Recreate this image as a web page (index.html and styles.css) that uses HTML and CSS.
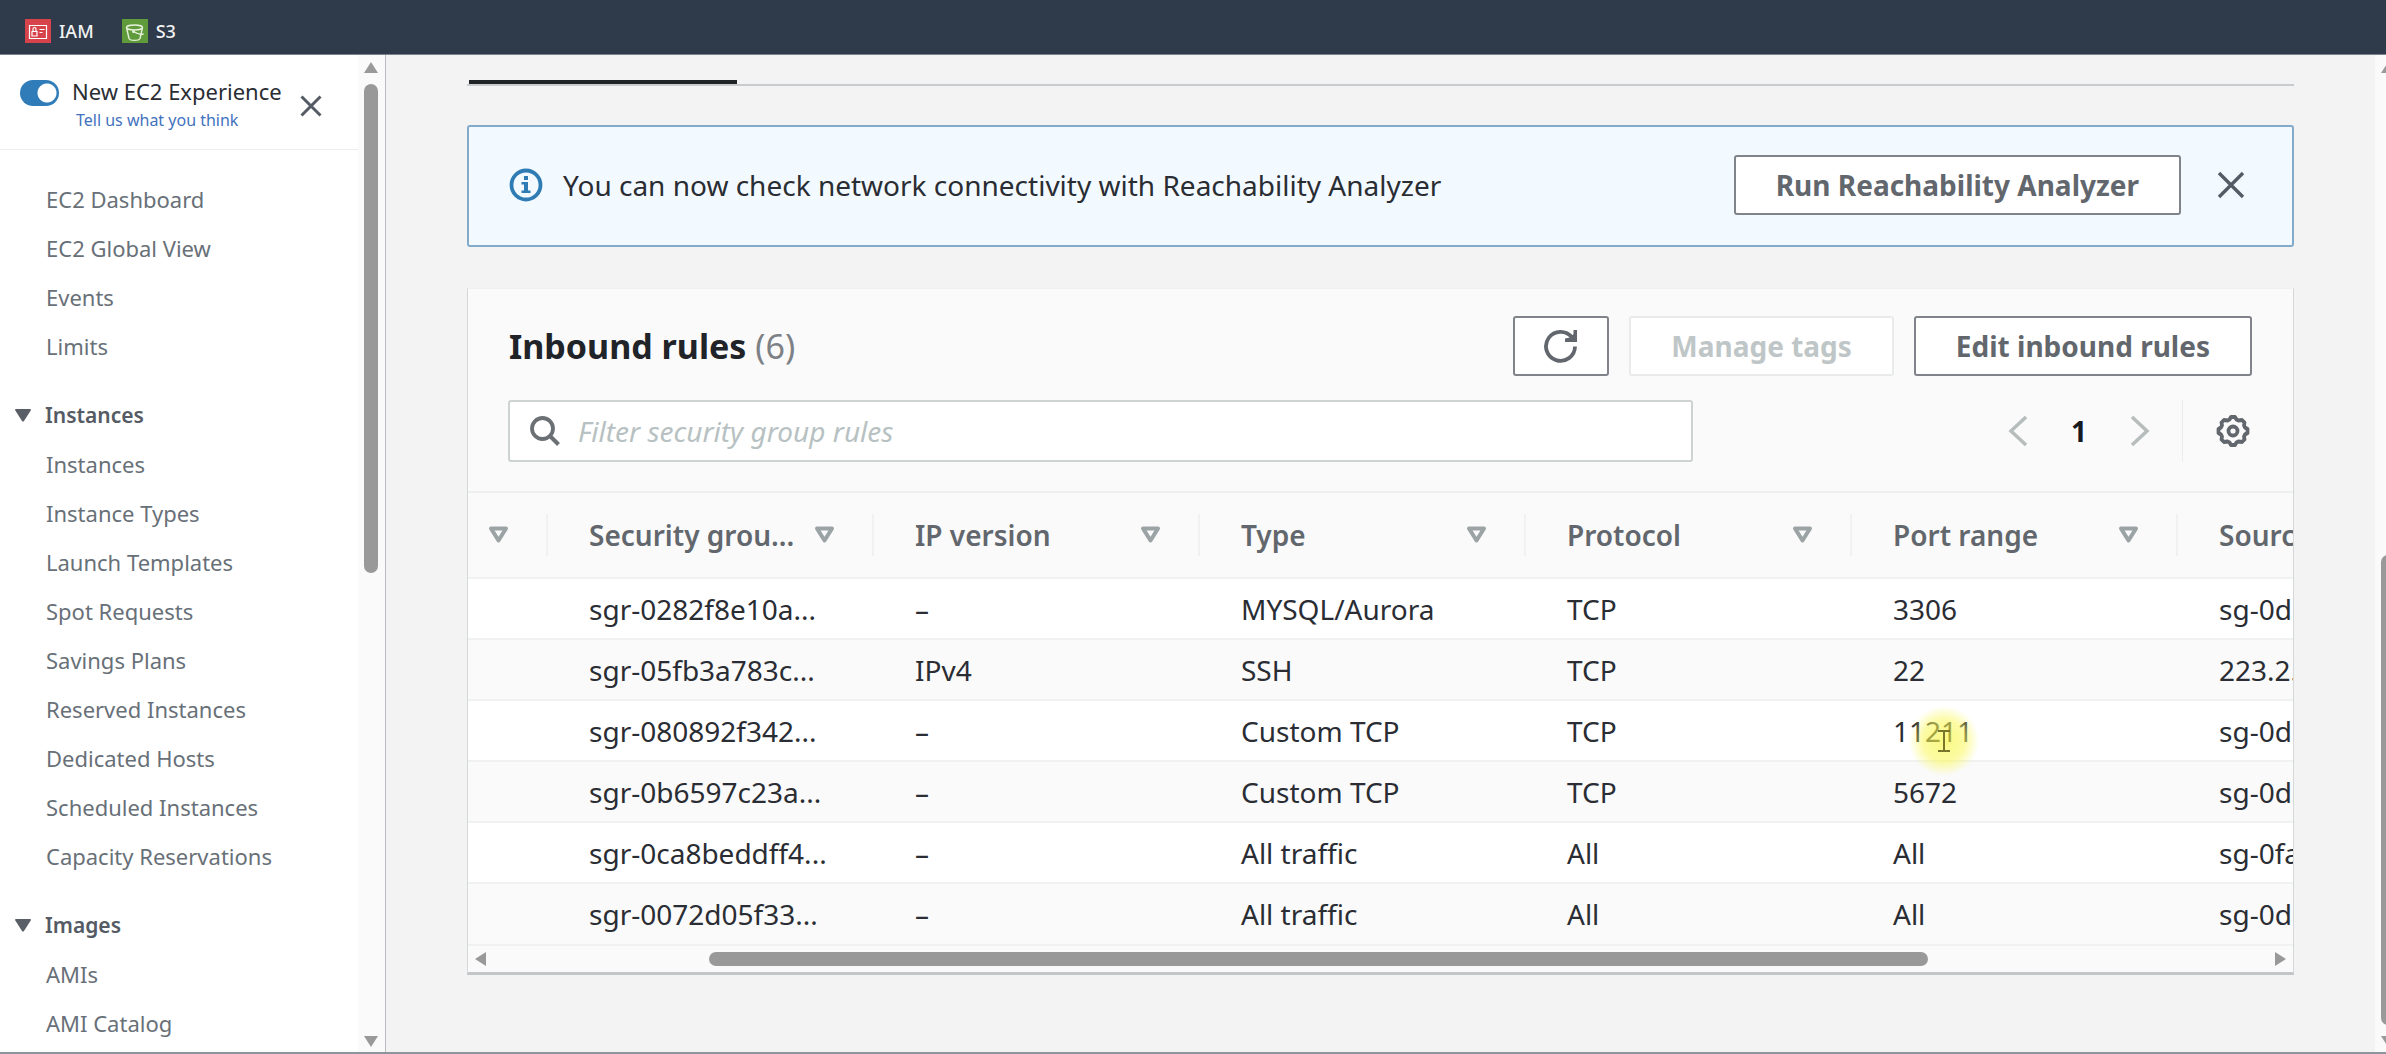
FILE: index.html
```
<!DOCTYPE html>
<html lang="en">
<head>
<meta charset="utf-8">
<title>Security group | EC2</title>
<link rel="stylesheet" href="styles.css">
</head>
<body>
<header class="topbar">
  <a class="service" href="#iam">
    <svg class="service-icon" viewBox="0 0 26 24" aria-hidden="true">
      <rect width="26" height="24" fill="#d6434a"/>
      <g fill="none" stroke="#fff" stroke-width="1.2"><path d="M4.500 6.500h17v13h-17z"/><path d="M7 12.500h5v4.500H7zM8 12.500v-2.500a1.500 1.500 0 0 1 3 0v2.500M14.500 10.500h5M14.500 13.500h3"/></g>
    </svg>
    <span>IAM</span>
  </a>
  <a class="service" href="#s3">
    <svg class="service-icon" viewBox="0 0 26 24" aria-hidden="true">
      <rect width="26" height="24" fill="#5f9a3b"/>
      <g fill="none" stroke="#e6f1da" stroke-width="1.400"><ellipse cx="12.500" cy="8.500" rx="8" ry="2.500"/><path d="M4.500 8.500l2.500 11c1.500 2.500 9.500 2.500 11 0l2.500-11M11.500 12.500c4 2.500 9.500 4 10 2"/></g><circle cx="11.500" cy="12.500" r="1.500" fill="#e6f1da"/>
    </svg>
    <span>S3</span>
  </a>
</header>

<div class="shell">
  <aside class="sidebar">
    <div class="sidebar-body">
      <div class="experience">
        <input class="toggle" type="checkbox" id="new-experience" checked>
        <div class="experience-text">
          <label for="new-experience">New EC2 Experience</label>
          <a href="#feedback">Tell us what you think</a>
        </div>
        <button class="icon-button" type="button" aria-label="Close navigation">
          <svg class="close-small" viewBox="0 0 22 22" aria-hidden="true"><path d="M1.500 1.500l19 19M20.500 1.500l-19 19" stroke="#545b64" stroke-width="3"/></svg>
        </button>
      </div>
      <nav class="nav" aria-label="EC2">
        <ul class="nav-list">
          <li><a href="#dashboard">EC2 Dashboard</a></li>
          <li><a href="#global">EC2 Global View</a></li>
          <li><a href="#events">Events</a></li>
          <li><a href="#limits">Limits</a></li>
        </ul>
        <section>
          <h2 class="nav-heading"><svg class="caret" viewBox="0 0 16 13" aria-hidden="true"><path d="M1 0h14a1 1 0 0 1 1 1L9 12q-1 1-2 0L0 1a1 1 0 0 1 1-1z" fill="#5a5e66"/></svg>Instances</h2>
          <ul class="nav-list">
            <li><a href="#instances">Instances</a></li>
            <li><a href="#types">Instance Types</a></li>
            <li><a href="#templates">Launch Templates</a></li>
            <li><a href="#spot">Spot Requests</a></li>
            <li><a href="#savings">Savings Plans</a></li>
            <li><a href="#reserved">Reserved Instances</a></li>
            <li><a href="#hosts">Dedicated Hosts</a></li>
            <li><a href="#scheduled">Scheduled Instances</a></li>
            <li><a href="#capacity">Capacity Reservations</a></li>
          </ul>
        </section>
        <section>
          <h2 class="nav-heading"><svg class="caret" viewBox="0 0 16 13" aria-hidden="true"><path d="M1 0h14a1 1 0 0 1 1 1L9 12q-1 1-2 0L0 1a1 1 0 0 1 1-1z" fill="#5a5e66"/></svg>Images</h2>
          <ul class="nav-list">
            <li><a href="#amis">AMIs</a></li>
            <li><a href="#catalog">AMI Catalog</a></li>
          </ul>
        </section>
      </nav>
    </div>
    <div class="scroll-v" aria-hidden="true">
      <svg class="arrow-v" viewBox="0 0 14 11"><path d="M7 0l7 11H0z" fill="#999"/></svg>
      <div class="track-v track-side"><div class="thumb-v"></div></div>
      <svg class="arrow-v" viewBox="0 0 14 11"><path d="M7 11l7-11H0z" fill="#999"/></svg>
    </div>
  </aside>

  <main class="main">
    <div class="tabs"><div class="tab-active"></div></div>

    <section class="alert">
      <svg class="info-icon" viewBox="0 0 34 34" aria-hidden="true"><circle cx="17" cy="17" r="14.500" fill="none" stroke="#2f7cb5" stroke-width="3.800"/><path d="M15 8h4v4h-4zM12.500 14h6.500v8.500h2.500V25h-9v-2.500H15v-6h-2.500z" fill="#2f7cb5"/></svg>
      <p class="alert-text">You can now check network connectivity with Reachability Analyzer</p>
      <button class="button" type="button">Run Reachability Analyzer</button>
      <button class="icon-button" type="button" aria-label="Dismiss">
        <svg class="close-large" viewBox="0 0 28 28" aria-hidden="true"><path d="M2 2l24 24M26 2L2 26" stroke="#545b64" stroke-width="3.400"/></svg>
      </button>
    </section>

    <section class="panel">
      <div class="panel-head">
        <h1 class="title">Inbound rules <span class="count">(6)</span></h1>
        <div class="actions">
          <button class="button button-icon" type="button" aria-label="Refresh">
            <svg class="refresh" viewBox="0 0 34 34" aria-hidden="true"><path d="M31 17.500A14.500 14.500 0 1 1 28 8.500" fill="none" stroke="#62676d" stroke-width="3.800"/><path d="M33 1v12H21V9.500l5-1L29.500 5V1z" fill="#62676d"/></svg>
          </button>
          <button class="button" type="button" disabled>Manage tags</button>
          <button class="button" type="button">Edit inbound rules</button>
        </div>
      </div>
      <div class="filter-row">
        <label class="search">
          <svg class="search-icon" viewBox="0 0 30 30" aria-hidden="true"><circle cx="12.500" cy="12.500" r="10.500" fill="none" stroke="#6b7075" stroke-width="3.800"/><path d="M20 20l8.500 8.500" stroke="#6b7075" stroke-width="4"/></svg>
          <input type="text" aria-label="Filter rules" placeholder="Filter security group rules">
        </label>
        <div class="pager">
          <button class="icon-button" type="button" aria-label="Previous page"><svg class="chevron" viewBox="0 0 20 30" aria-hidden="true"><path d="M18 1L3 15l15 14" fill="none" stroke="#b7bcbc" stroke-width="3.500"/></svg></button>
          <button class="page" type="button">1</button>
          <button class="icon-button" type="button" aria-label="Next page"><svg class="chevron" viewBox="0 0 20 30" aria-hidden="true"><path d="M2 1l15 14L2 29" fill="none" stroke="#b7bcbc" stroke-width="3.500"/></svg></button>
          <button class="icon-button settings" type="button" aria-label="Preferences">
            <svg class="gear" viewBox="0 0 34 34" aria-hidden="true"><g fill="none" stroke="#62676d" stroke-width="3.800" stroke-linejoin="round"><path d="M13.500 5.500L15 3h4l1.500 2.500 2 1 3.500-.5 2.500 2.500-.5 3 1 2L31.500 15v4L29 20.500l-1 2 .5 3-2.500 2.500-3.500-.5-2 1L19 31h-4l-1.500-2.500-2-1-3.500.5L5.500 25.500l.5-3-1-2L2.500 19v-4L5 13.500l1-2-.5-3L8 6l3.500.5z"/><circle cx="17" cy="17" r="4.500"/></g></svg>
          </button>
        </div>
      </div>

      <div class="table-wrap">
        <table class="rules">
          <colgroup><col class="col-cut"><col><col><col><col><col><col></colgroup>
          <thead>
            <tr>
              <th scope="col"><div class="th"><span></span><svg class="sort" viewBox="0 0 22 18" aria-hidden="true"><path d="M3 2.500h15l-7.500 12z" fill="none" stroke="#9ba3a4" stroke-width="4" stroke-linejoin="round"/></svg></div></th>
              <th scope="col"><div class="th"><span>Security grou...</span><svg class="sort" viewBox="0 0 22 18" aria-hidden="true"><path d="M3 2.500h15l-7.500 12z" fill="none" stroke="#9ba3a4" stroke-width="4" stroke-linejoin="round"/></svg></div></th>
              <th scope="col"><div class="th"><span>IP version</span><svg class="sort" viewBox="0 0 22 18" aria-hidden="true"><path d="M3 2.500h15l-7.500 12z" fill="none" stroke="#9ba3a4" stroke-width="4" stroke-linejoin="round"/></svg></div></th>
              <th scope="col"><div class="th"><span>Type</span><svg class="sort" viewBox="0 0 22 18" aria-hidden="true"><path d="M3 2.500h15l-7.500 12z" fill="none" stroke="#9ba3a4" stroke-width="4" stroke-linejoin="round"/></svg></div></th>
              <th scope="col"><div class="th"><span>Protocol</span><svg class="sort" viewBox="0 0 22 18" aria-hidden="true"><path d="M3 2.500h15l-7.500 12z" fill="none" stroke="#9ba3a4" stroke-width="4" stroke-linejoin="round"/></svg></div></th>
              <th scope="col"><div class="th"><span>Port range</span><svg class="sort" viewBox="0 0 22 18" aria-hidden="true"><path d="M3 2.500h15l-7.500 12z" fill="none" stroke="#9ba3a4" stroke-width="4" stroke-linejoin="round"/></svg></div></th>
              <th scope="col"><div class="th"><span>Source</span></div></th>
            </tr>
          </thead>
          <tbody>
            <tr><td></td><td>sgr-0282f8e10a...</td><td>–</td><td>MYSQL/Aurora</td><td>TCP</td><td>3306</td><td>sg-0dc</td></tr>
            <tr><td></td><td>sgr-05fb3a783c...</td><td>IPv4</td><td>SSH</td><td>TCP</td><td>22</td><td>223.2.</td></tr>
            <tr><td></td><td>sgr-080892f342...</td><td>–</td><td>Custom TCP</td><td>TCP</td><td class="hovered">11211<span class="pointer" aria-hidden="true"><svg class="ibeam" viewBox="0 0 12 22"><path d="M0 1h12M0 21h12M6 1v20" stroke="#77762a" stroke-width="2"/></svg></span></td><td>sg-0dc</td></tr>
            <tr><td></td><td>sgr-0b6597c23a...</td><td>–</td><td>Custom TCP</td><td>TCP</td><td>5672</td><td>sg-0dc</td></tr>
            <tr><td></td><td>sgr-0ca8beddff4...</td><td>–</td><td>All traffic</td><td>All</td><td>All</td><td>sg-0fa</td></tr>
            <tr><td></td><td>sgr-0072d05f33...</td><td>–</td><td>All traffic</td><td>All</td><td>All</td><td>sg-0dc</td></tr>
          </tbody>
        </table>
      </div>
      <div class="scroll-h" aria-hidden="true">
        <svg class="arrow-h" viewBox="0 0 11 14"><path d="M0 7l11-7v14z" fill="#999"/></svg>
        <div class="track-h"><div class="thumb-h"></div></div>
        <svg class="arrow-h" viewBox="0 0 11 14"><path d="M11 7L0 0v14z" fill="#999"/></svg>
      </div>
    </section>
  </main>

  <div class="scroll-v scroll-page" aria-hidden="true">
    <svg class="arrow-v" viewBox="0 0 14 11"><path d="M7 0l7 11H0z" fill="#999"/></svg>
    <div class="track-v track-page"><div class="thumb-v"></div></div>
    <svg class="arrow-v" viewBox="0 0 14 11"><path d="M7 11l7-11H0z" fill="#999"/></svg>
  </div>
</div>
</body>
</html>
```
FILE: styles.css
```
* {
  box-sizing: border-box;
}

body {
  margin: 0;
  height: 100vh;
  display: flex;
  flex-direction: column;
  overflow: hidden;
  border-bottom: 2px solid #8f939b;
  background: #f3f3f3;
  color: #2a2d33;
  font-family: "Noto Sans", "Open Sans", sans-serif;
  font-size: 28px;
}

a {
  color: inherit;
  text-decoration: none;
}

button {
  font-family: inherit;
  cursor: pointer;
}

svg {
  display: block;
  flex: none;
}

/* Top bar */
.topbar {
  flex: none;
  height: 55px;
  display: flex;
  align-items: center;
  gap: 28px;
  padding: 8px 25px 0;
  border-bottom: 1px solid #7b828c;
  background: #2f3a4b;
  color: #f2f3f3;
}

.service {
  display: flex;
  align-items: center;
  gap: 8px;
  font-size: 18px;
  font-weight: 500;
  line-height: 22px;
}

.service-icon {
  width: 26px;
  height: 24px;
}

.shell {
  flex: 1;
  min-height: 0;
  display: flex;
}

/* Sidebar */
.sidebar {
  flex: none;
  width: 386px;
  display: flex;
  background: #fff;
  border-right: 1px solid #b9bcc0;
}

.sidebar-body {
  flex: 1;
  overflow: hidden;
}

.experience {
  height: 95px;
  display: flex;
  align-items: flex-start;
  padding: 21px 36px 0 20px;
  border-bottom: 1px solid #eaeded;
}

.toggle {
  appearance: none;
  flex: none;
  width: 39px;
  height: 26px;
  margin: 4px 13px 0 0;
  border-radius: 13px;
  background: radial-gradient(circle at 27px 13px, #fff 9px, #2f7cb8 10px);
}

.experience-text {
  flex: 1;
  display: flex;
  flex-direction: column;
  font-size: 22px;
  line-height: 30px;
  white-space: nowrap;
}

.experience-text a {
  padding-left: 4px;
  color: #4272be;
  font-size: 16px;
  line-height: 28px;
}

.icon-button {
  flex: none;
  padding: 0;
  border: 0;
  background: none;
}

.close-small {
  width: 22px;
  height: 22px;
  margin-top: 19px;
}

.nav {
  display: flex;
  flex-direction: column;
  gap: 20px;
  padding-top: 25px;
  color: #687078;
  font-size: 22px;
  line-height: 49px;
}

.nav-list {
  margin: 0;
  padding: 0 0 0 46px;
  list-style: none;
}

.nav-heading {
  display: flex;
  align-items: center;
  gap: 14px;
  margin: 0;
  padding-left: 15px;
  color: #545b64;
  font-size: 21px;
  font-weight: 600;
}

.caret {
  width: 16px;
  height: 13px;
}

/* Scroll bars */
.scroll-v {
  flex: none;
  width: 27px;
  display: flex;
  flex-direction: column;
  gap: 11px;
  padding: 7px 0 5px 6px;
  background: #fafafa;
}

.arrow-v {
  width: 14px;
  height: 11px;
}

.track-v {
  flex: 1;
  min-height: 0;
}

.thumb-v {
  width: 14px;
  border-radius: 7px;
  background: #999;
}

.track-side .thumb-v {
  height: 52%;
}

.track-page {
  display: flex;
  flex-direction: column;
  justify-content: flex-end;
}

.track-page .thumb-v {
  height: 50%;
}

.scroll-page {
  width: 11px;
  overflow: hidden;
}

/* Content */
.main {
  flex: 1;
  min-width: 0;
  padding: 0 81px;
}

.tabs {
  height: 31px;
  display: flex;
  align-items: flex-end;
  border-bottom: 2px solid #c9cccf;
}

.tab-active {
  width: 268px;
  height: 4px;
  margin-left: 2px;
  background: #1f2326;
}

.alert {
  height: 122px;
  display: flex;
  align-items: center;
  margin-top: 39px;
  padding: 0 47px 2px 40px;
  border: 2px solid #84aaca;
  border-radius: 3px;
  background: #f3faff;
}

.info-icon {
  width: 34px;
  height: 34px;
}

.alert-text {
  flex: 1;
  margin: 0 0 0 20px;
}

.button {
  height: 60px;
  padding: 0 40px;
  border: 2px solid #80848a;
  border-radius: 3px;
  background: #fff;
  color: #62676d;
  font-size: 28px;
  font-weight: 700;
  line-height: 36px;
  white-space: nowrap;
}

.button:disabled {
  border-color: #e9ebeb;
  color: #bfc6c7;
}

.alert .button {
  margin-right: 36px;
}

.close-large {
  width: 28px;
  height: 28px;
}

.panel {
  margin-top: 41px;
  border: 1px solid #d5d8da;
  border-top-color: #f0f0f0;
  border-bottom: 3px solid #c2c6c7;
  background: #fafafa;
}

.panel-head {
  display: flex;
  align-items: center;
  justify-content: space-between;
  padding: 27px 41px 0;
}

.title {
  margin: 0;
  color: #202328;
  font-size: 34px;
  font-weight: 700;
  line-height: 60px;
}

.count {
  color: #7d8186;
  font-weight: 400;
}

.actions {
  display: flex;
  gap: 20px;
}

.button-icon {
  padding: 0 29px;
}

.refresh {
  width: 34px;
  height: 34px;
}

.filter-row {
  height: 115px;
  display: flex;
  align-items: flex-start;
  justify-content: space-between;
  padding: 24px 43px 0 40px;
}

.search {
  width: 68%;
  height: 62px;
  display: flex;
  align-items: center;
  gap: 18px;
  padding: 0 20px;
  border: 2px solid #cdd2d3;
  border-radius: 3px;
  background: #fff;
}

.search-icon {
  width: 30px;
  height: 30px;
}

.search input {
  flex: 1;
  padding: 0;
  border: 0;
  outline: 0;
  background: none;
  font: inherit;
}

.search input::placeholder {
  color: #b7c1c2;
  font-style: italic;
  opacity: 1;
}

.pager {
  display: flex;
  align-items: center;
  height: 62px;
}

.chevron {
  width: 20px;
  height: 30px;
}

.page {
  width: 102px;
  padding: 0;
  border: 0;
  background: none;
  color: #16191f;
  font-size: 28px;
  font-weight: 700;
}

.settings {
  height: 62px;
  margin-left: 32px;
  padding-left: 33px;
  border-left: 1px solid #eaeded;
}

.gear {
  width: 34px;
  height: 34px;
}

/* Rules table */
.table-wrap {
  overflow: hidden;
}

.rules {
  width: 2036px;
  table-layout: fixed;
  border-collapse: collapse;
  border-top: 2px solid #eeefef;
}

.col-cut {
  width: 80px;
}

.rules th {
  height: 86px;
  padding: 0;
  color: #62676d;
  font-weight: 600;
  text-align: left;
}

.th {
  height: 42px;
  display: flex;
  align-items: center;
  justify-content: space-between;
  padding: 0 36px 0 41px;
  border-right: 2px solid #f0f1f1;
}

th:first-child .th {
  padding-left: 0;
}

.sort {
  width: 22px;
  height: 18px;
}

.rules td {
  height: 61px;
  padding: 0 0 0 41px;
  border-top: 2px solid #f0f1f1;
  line-height: 36px;
  white-space: nowrap;
}

.rules tbody tr:nth-child(odd) {
  background: #fff;
}

.rules .hovered {
  position: relative;
}

.pointer {
  position: absolute;
  top: 5px;
  left: 57px;
  width: 70px;
  height: 70px;
  display: grid;
  place-items: center;
  border-radius: 50%;
  background: radial-gradient(circle closest-side, rgba(248, 246, 60, 0.65) 0, rgba(250, 248, 90, 0.55) 60%, rgba(255, 255, 120, 0) 100%);
}

.ibeam {
  width: 12px;
  height: 22px;
}

.scroll-h {
  height: 28px;
  display: flex;
  align-items: center;
  justify-content: space-between;
  padding: 0 7px;
  border-top: 2px solid #f0f1f1;
}

.arrow-h {
  width: 11px;
  height: 14px;
}

.track-h {
  flex: 1;
  margin: 0 11px;
}

.thumb-h {
  width: 69%;
  height: 14px;
  margin-left: 12%;
  border-radius: 7px;
  background: #999;
}
```
